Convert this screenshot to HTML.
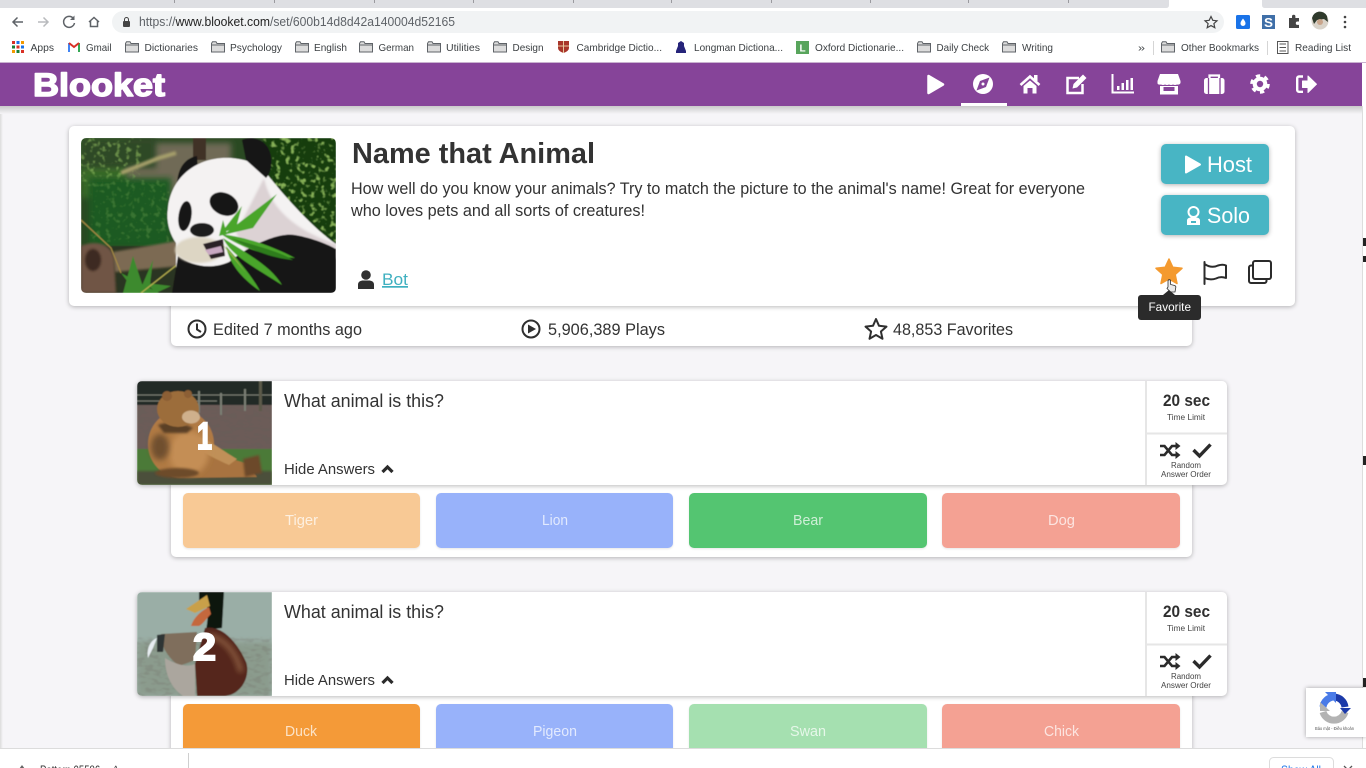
<!DOCTYPE html>
<html lang="en"><head><meta charset="utf-8"><title>Blooket - Name that Animal</title>
<style>
html,body{margin:0;padding:0;width:1366px;height:768px;overflow:hidden;background:#f6f5f8;font-family:"Liberation Sans",sans-serif}
.a{position:absolute}
.card{background:#fff;box-shadow:0 1px 5px rgba(0,0,0,.28);border-radius:5px}
.btn{position:absolute;height:55px;border-radius:5px;box-shadow:0 1px 2px rgba(0,0,0,.1)}
.teal{position:absolute;left:1161px;width:108px;height:40px;background:#48b5c4;border-radius:5px;box-shadow:0 1px 5px rgba(0,0,0,.3)}
svg{position:absolute;left:0;top:0}
text{font-family:"Liberation Sans",sans-serif;white-space:pre}
</style></head><body>
<div class="a" style="left:0;top:107px;width:3px;height:641px;background:linear-gradient(90deg,#dcdcdc,#f6f5f8)"></div>
<div class="a" style="left:0;top:106px;width:1362px;height:8px;background:linear-gradient(#c9c9c9,#f6f5f8)"></div>
<div class="a" style="left:1362px;top:106px;width:4px;height:642px;background:#fff;border-left:1px solid #ddd;box-sizing:border-box"></div>

<div class="card a" style="left:171px;top:300px;width:1021px;height:46px"></div>
<div class="card a" style="left:69px;top:126px;width:1226px;height:180px"></div>
<div class="teal" style="top:144px"></div><div class="teal" style="top:195px"></div>

<div class="card a" style="left:171px;top:480px;width:1021px;height:77px"></div>
<div class="card a" style="left:137px;top:381px;width:1090px;height:104px"></div>
<div class="btn" style="left:183px;top:493px;width:237px;background:#f8c995"></div>
<div class="btn" style="left:436px;top:493px;width:237px;background:#98b2fa"></div>
<div class="btn" style="left:689px;top:493px;width:238px;background:#54c571"></div>
<div class="btn" style="left:942px;top:493px;width:238px;background:#f4a193"></div>

<div class="card a" style="left:171px;top:691px;width:1021px;height:77px"></div>
<div class="card a" style="left:137px;top:592px;width:1090px;height:104px"></div>
<div class="btn" style="left:183px;top:704px;width:237px;background:#f49a38"></div>
<div class="btn" style="left:436px;top:704px;width:237px;background:#98b2fa"></div>
<div class="btn" style="left:689px;top:704px;width:238px;background:#a5e0b0"></div>
<div class="btn" style="left:942px;top:704px;width:238px;background:#f4a193"></div>

<svg width="1366" height="768" viewBox="0 0 1366 768" xmlns="http://www.w3.org/2000/svg">
<defs>
<filter id="b05" x="-5%" y="-5%" width="110%" height="110%"><feGaussianBlur stdDeviation=".6"/></filter>
<filter id="b1" x="-20%" y="-20%" width="140%" height="140%"><feGaussianBlur stdDeviation="1"/></filter>
<filter id="b3" x="-30%" y="-30%" width="160%" height="160%"><feGaussianBlur stdDeviation="3"/></filter>
<filter id="leaf" x="0" y="0" width="100%" height="100%"><feTurbulence type="fractalNoise" baseFrequency=".2" numOctaves="2" seed="4"/><feColorMatrix values="0 0 0 0 .36  0 0 0 0 .62  0 0 0 0 .14  0 0 0 6 -3.300"/></filter>
<filter id="dk" x="0" y="0" width="100%" height="100%"><feTurbulence type="fractalNoise" baseFrequency=".12 .3" numOctaves="2" seed="8"/><feColorMatrix values="0 0 0 0 .14  0 0 0 0 .11  0 0 0 0 .1  0 0 0 5 -2.400"/></filter>
<filter id="shd" x="-20%" y="-20%" width="140%" height="140%"><feDropShadow dx="0" dy="0" stdDeviation="2" flood-color="#000" flood-opacity=".35"/></filter>
<clipPath id="cp"><rect width="255" height="155" rx="5"/></clipPath>
<clipPath id="cq"><path d="M5 0H135V104H5a5 5 0 0 1-5-5V5a5 5 0 0 1 5-5z"/></clipPath>
<symbol id="fd" viewBox="0 0 14 12"><path d="M.5 2.500V11h13V2.500H6L5 .8H1.500z" fill="#dcdcdc" stroke="#5f6368" stroke-width="1"/><path d="M.5 4H13.500" stroke="#5f6368" stroke-width="1"/></symbol>
<g id="shuf" fill="none" stroke="#2b2b2b" stroke-width="2.600"><path d="M0 4H4.500L12 13H16M0 13H4.500L12 4H16"/><path d="M15.500 0L20.500 4L15.500 8zM15.500 9L20.500 13L15.500 17z" fill="#2b2b2b" stroke="none"/></g>
</defs>

<!-- Chrome -->
<rect width="1366" height="63" fill="#fff"/>
<rect width="1366" height="8" fill="#dedfe3"/>
<path d="M1166 8q3 0 3-3V0h93v5q0 3 3 3z" fill="#fff"/>
<g fill="#9a9a9f"><rect x="174" width="1" height="3"/><rect x="274" width="1" height="3"/><rect x="374" width="1" height="3"/><rect x="473" width="1" height="3"/><rect x="573" width="1" height="3"/><rect x="671" width="1" height="3"/><rect x="771" width="1" height="3"/><rect x="870" width="1" height="3"/><rect x="968" width="1" height="3"/><rect x="1068" width="1" height="3"/></g>
<rect x="112" y="11" width="1112" height="22" rx="11" fill="#f1f3f4"/>
<g fill="none" stroke="#5f6368" stroke-width="1.500"><path d="M23 22H13M17.500 17.500L13 22l4.500 4.500"/><path d="M38 22H48M43.500 17.500L48 22l-4.500 4.500" stroke="#b8babd"/><path d="M73.500 18.500a5.500 5.500 0 1 0 1 4.500"/><path d="M89 22l5-4.500 5 4.500M90.500 21v5.500h7V21"/></g>
<path d="M74.500 15.500v4.500h-4.500z" fill="#5f6368"/>
<rect x="123" y="21" width="7" height="6" rx="1" fill="#444"/><path d="M124.500 21v-1.500a2 2 0 0 1 4 0V21" fill="none" stroke="#444" stroke-width="1"/>
<text x="139" y="26" font-size="12.500" textLength="316" lengthAdjust="spacingAndGlyphs" fill="#5f6368">https://<tspan fill="#222">www.blooket.com</tspan>/set/600b14d8d42a140004d52165</text>
<polygon points="1211,16.500 1212.800,20.300 1217,20.800 1213.900,23.600 1214.800,27.700 1211,25.600 1207.200,27.700 1208.100,23.600 1205,20.800 1209.200,20.300" fill="none" stroke="#444" stroke-width="1.200"/>
<rect x="1236" y="15" width="14" height="14" rx="1.500" fill="#1a73e8"/><path d="M1243 18.500c1.800 2.500 2.500 3.500 2.500 5a2.500 2.500 0 0 1-5 0c0-1.500.7-2.500 2.500-5z" fill="#fff"/>
<rect x="1262" y="15" width="13" height="14" fill="#3f6fa8"/><text x="1264" y="27" font-size="13" font-weight="bold" fill="#fff" textLength="9" lengthAdjust="spacingAndGlyphs">S</text>
<path d="M1289 18h3v-1.500a1.700 1.700 0 0 1 3.400 0V18h3.600v3.500h-1.500a1.700 1.700 0 0 0 0 3.400h1.500V28h-10z" fill="#444"/>
<circle cx="1320" cy="21" r="8.500" fill="#d9d3c9"/><path d="M1312 18a8 8 0 0 1 15-2l1 6-4-3-7 1-3 4z" fill="#2f3a2c"/><circle cx="1320" cy="22" r="3" fill="#c9a58b"/>
<g fill="#444"><circle cx="1345" cy="17" r="1.300"/><circle cx="1345" cy="22" r="1.300"/><circle cx="1345" cy="27" r="1.300"/></g>

<!-- bookmarks -->
<g>
<rect x="12" y="41" width="3" height="3" fill="#d93025"/><rect x="16.500" y="41" width="3" height="3" fill="#1a73e8"/><rect x="21" y="41" width="3" height="3" fill="#f29900"/>
<rect x="12" y="45.500" width="3" height="3" fill="#188038"/><rect x="16.500" y="45.500" width="3" height="3" fill="#d93025"/><rect x="21" y="45.500" width="3" height="3" fill="#1a73e8"/>
<rect x="12" y="50" width="3" height="3" fill="#f29900"/><rect x="16.500" y="50" width="3" height="3" fill="#188038"/><rect x="21" y="50" width="3" height="3" fill="#d93025"/>
<path d="M69 52V43" stroke="#4285f4" stroke-width="2"/><path d="M79 52V43" stroke="#34a853" stroke-width="2"/><path d="M69 43l5 4 5-4" fill="none" stroke="#d93025" stroke-width="2"/>
<use href="#fd" x="125" y="41" width="14" height="12"/><use href="#fd" x="211" y="41" width="14" height="12"/><use href="#fd" x="295" y="41" width="14" height="12"/><use href="#fd" x="359" y="41" width="14" height="12"/><use href="#fd" x="427" y="41" width="14" height="12"/><use href="#fd" x="493" y="41" width="14" height="12"/><use href="#fd" x="917" y="41" width="14" height="12"/><use href="#fd" x="1002" y="41" width="14" height="12"/><use href="#fd" x="1161" y="41" width="14" height="12"/>
<path d="M558 41h11v7q0 3-5.500 5-5.500-2-5.500-5z" fill="#a8362a"/><path d="M563.500 41v12M558 46h11" stroke="#e8c9a0" stroke-width="1"/>
<path d="M678 43l3-2 3 2v3l2 5v2h-10v-2l2-5z" fill="#26247a"/>
<rect x="796" y="41" width="13" height="13" fill="#58a55c"/><text x="799.500" y="51.500" font-size="10" font-weight="bold" fill="#fff">L</text>
<rect x="1277.500" y="41.500" width="10.500" height="12" fill="none" stroke="#555" stroke-width="1"/><path d="M1279.500 44h6.500M1279.500 47.500h6.500M1279.500 51h6.500" stroke="#555" stroke-width="1"/>
<rect x="1153" y="41" width="1" height="14" fill="#d5d5d5"/><rect x="1267" y="41" width="1" height="14" fill="#d5d5d5"/>
</g>
<g font-size="10.500" fill="#3c4043">
<text x="30.500" y="51" textLength="23.500" lengthAdjust="spacingAndGlyphs">Apps</text>
<text x="86" y="51" textLength="25.500" lengthAdjust="spacingAndGlyphs">Gmail</text>
<text x="144.500" y="51" textLength="53.500" lengthAdjust="spacingAndGlyphs">Dictionaries</text>
<text x="230" y="51" textLength="52" lengthAdjust="spacingAndGlyphs">Psychology</text>
<text x="314" y="51" textLength="33" lengthAdjust="spacingAndGlyphs">English</text>
<text x="378.500" y="51" textLength="35.500" lengthAdjust="spacingAndGlyphs">German</text>
<text x="446" y="51" textLength="34" lengthAdjust="spacingAndGlyphs">Utilities</text>
<text x="512.500" y="51" textLength="31" lengthAdjust="spacingAndGlyphs">Design</text>
<text x="576.500" y="51" textLength="85.500" lengthAdjust="spacingAndGlyphs">Cambridge Dictio...</text>
<text x="694" y="51" textLength="89" lengthAdjust="spacingAndGlyphs">Longman Dictiona...</text>
<text x="815" y="51" textLength="89" lengthAdjust="spacingAndGlyphs">Oxford Dictionarie...</text>
<text x="936.500" y="51" textLength="52.500" lengthAdjust="spacingAndGlyphs">Daily Check</text>
<text x="1022" y="51" textLength="31" lengthAdjust="spacingAndGlyphs">Writing</text>
<text x="1138" y="51" textLength="7" lengthAdjust="spacingAndGlyphs">»</text>
<text x="1181" y="51" textLength="78" lengthAdjust="spacingAndGlyphs">Other Bookmarks</text>
<text x="1295" y="51" textLength="56" lengthAdjust="spacingAndGlyphs">Reading List</text>
</g>

<!-- Nav -->
<rect y="62" width="1366" height="1" fill="#c9b2d0"/>
<rect y="63" width="1362" height="43" fill="#864499"/>
<rect x="1362" y="63" width="4" height="43" fill="#fff"/>
<text x="33" y="96" font-size="32" font-weight="bold" fill="#fff" stroke="#fff" stroke-width="1.500" stroke-linejoin="round" textLength="132" lengthAdjust="spacingAndGlyphs">Blooket</text>
<rect x="961" y="103" width="46" height="3" fill="#fff"/>
<path d="M928.500 76L943 84.500L928.500 93z" fill="#fff" stroke="#fff" stroke-width="2.500" stroke-linejoin="round"/>
<circle cx="983" cy="84" r="10" fill="#fff"/><path d="M989.500 77.500L986 87L976.500 90.500L980 81z" fill="#864499"/><circle cx="983" cy="84" r="1.500" fill="#fff"/>
<path d="M1020.500 85L1030 76.500L1039.500 85" fill="none" stroke="#fff" stroke-width="2.600"/><path d="M1023.500 86L1030 80.500L1036.500 86V93.500H1032.500V88H1027.500V93.500H1023.500z" fill="#fff"/><rect x="1034" y="75" width="3.500" height="6" fill="#fff"/>
<path d="M1079 78H1067.500V93H1082.500V84" fill="none" stroke="#fff" stroke-width="2.500"/><path d="M1072.500 88.500L1073.500 84L1083 74.500L1086.500 78L1077 87.500z" fill="#fff"/>
<path d="M1112.500 74V92.500H1134" fill="none" stroke="#fff" stroke-width="2"/><g fill="#fff"><rect x="1117" y="86" width="2.500" height="4"/><rect x="1121.500" y="83" width="2.500" height="7"/><rect x="1126" y="80" width="2.500" height="10"/><rect x="1130.500" y="78" width="2.500" height="12"/></g>
<path d="M1160 74H1178L1180.500 81V83a3 3 0 0 1-3.500 1.500q-2 1-4 0-2 1-4 0-2 1-4 0-2 1-4 0-3.500.5-3.500-1.500V81z" fill="#fff"/><path d="M1160 86H1178V94.500H1160z" fill="#fff"/><rect x="1163.500" y="87" width="11" height="4" fill="#864499"/>
<rect x="1204" y="78" width="20.500" height="16" rx="2.500" fill="#fff"/><path d="M1209.500 78V75.500H1219V78" fill="none" stroke="#fff" stroke-width="2.200"/><path d="M1208.500 78V94M1220 78V94" stroke="#864499" stroke-width="1.300"/>
<circle cx="1260" cy="84" r="7.300" fill="#fff"/><circle cx="1260" cy="84" r="8.300" fill="none" stroke="#fff" stroke-width="3" stroke-dasharray="4.300 4.390"/><circle cx="1260" cy="84" r="3.200" fill="#864499"/>
<path d="M1303 76.500H1299a1.800 1.800 0 0 0-1.800 1.800V90a1.800 1.800 0 0 0 1.800 1.800H1303" fill="none" stroke="#fff" stroke-width="2.400"/><path d="M1302.500 81H1308V76L1316.500 84.200L1308 92.500V87.500H1302.500z" fill="#fff" stroke="#fff" stroke-linejoin="round"/>

<!-- Panda -->
<g transform="translate(81 138)"><g clip-path="url(#cp)"><g filter="url(#b05)">
<rect width="255" height="155" fill="#2b4a24"/>
<rect x="40" y="5" width="110" height="60" fill="#6f6a57" filter="url(#b3)"/>
<rect x="112" y="0" width="13" height="22" fill="#3f3028"/>
<rect x="0" y="0" width="45" height="60" fill="#3a6a2a" filter="url(#b3)"/>
<rect x="0" y="0" width="75" height="30" fill="#2f4a26" filter="url(#b3)"/>
<rect x="0" width="60" height="48" filter="url(#leaf)" opacity=".5"/>
<rect x="182" width="73" height="110" fill="#173d10"/>
<rect x="182" width="73" height="105" filter="url(#leaf)" opacity=".8"/>
<rect x="8" y="40" width="82" height="70" fill="#1e5a22" filter="url(#b3)"/>
<rect x="10" y="42" width="78" height="62" filter="url(#leaf)" opacity=".22"/>
<path d="M40 35L78 20L95 15" stroke="#a7a06c" stroke-width="4" fill="none" filter="url(#b1)"/>
<rect x="0" y="108" width="110" height="47" fill="#2c3420"/>
<path d="M32 114L96 103L100 128L34 134z" fill="#7c6a52" filter="url(#b1)"/>
<path d="M0 108C14 102 30 105 33 120L35 155H0z" fill="#705545" filter="url(#b1)"/><ellipse cx="12" cy="122" rx="8" ry="11" fill="#3d2c22" filter="url(#b1)"/>
<g fill="#3c8a2e"><path d="M52 118L64 155H42z"/><path d="M72 122L68 155L60 150z"/><path d="M40 135L78 155H55z"/><path d="M90 148L65 145L75 155z"/></g>
<path d="M0 82L30 110L40 135" stroke="#a58a45" stroke-width="1.200" fill="none"/><path d="M60 155L120 108" stroke="#b5b050" stroke-width="1.200" fill="none"/>
<path d="M96 45C97 30 104 20 116 18L118 46z" fill="#151515"/>
<path d="M186 36C205 60 232 90 255 106V155H95L95 105C88 95 85 82 87 70C90 40 115 18 150 20C165 21 178 26 186 36z" fill="#f4f2f2"/>
<path d="M183 40C190 75 222 95 255 106V120H170L155 95z" fill="#dcd2d4" filter="url(#b1)"/>
<path d="M91 155L97 118C110 128 130 132 148 124C165 110 195 94 214 97C232 100 248 107 255 111V155z" fill="#141313"/>
<ellipse cx="118" cy="112" rx="24" ry="13" fill="#ddd6c4" filter="url(#b1)"/>
<path d="M161 2C170-2 184 0 189 14C192 24 190 35 185 40L165 22z" fill="#141414"/>
<ellipse cx="143" cy="66" rx="15" ry="11" fill="#121212" transform="rotate(25 143 66)"/>
<ellipse cx="104" cy="78" rx="6.500" ry="15" fill="#121212" transform="rotate(8 104 78)"/>
<ellipse cx="121" cy="92" rx="12" ry="7" fill="#1d1d1d"/>
<path d="M122 106L142 101L144 118L130 121z" fill="#2a2026"/>
<path d="M124 112L140 108L142 114L128 117z" fill="#c9a9c2"/>
<g fill="#4aa52c"><path d="M142 97L196 56L172 90z"/><path d="M140 95L161 68L155 90z"/><path d="M138 98L142 82L146 96z"/><path d="M140 96C170 100 195 110 214 120C185 118 160 110 140 96z"/><path d="M142 100C165 115 190 128 201 147C175 130 150 118 142 100z"/><path d="M145 108C160 125 172 140 179 153C160 140 148 125 145 108z"/><path d="M150 100C175 108 200 114 212 122C190 120 170 112 150 100z" fill="#2f7d1f"/><path d="M140 105L165 135L150 115z" fill="#9fb14a"/></g>
</g></g></g>

<!-- Bear -->
<g transform="translate(137 381)"><g clip-path="url(#cq)"><g filter="url(#b05)">
<rect width="135" height="104" fill="#6c5b58"/>
<rect width="135" height="24" fill="#232a25"/>
<rect y="24" width="135" height="46" filter="url(#dk)"/>
<g stroke="#7a7f75" stroke-width="1"><path d="M0 14H135M0 20H80"/><path d="M62 10V32M84 12V34M108 8V30" stroke-width="2"/></g>
<rect x="122" y="0" width="3" height="30" fill="#5c5a48"/>
<rect y="68" width="135" height="36" fill="#4c7a38"/>
<rect y="90" width="135" height="14" fill="#4b4f3a" filter="url(#b1)"/>
<ellipse cx="44" cy="63" rx="33" ry="34" fill="#b07a44"/>
<path d="M52 56C70 62 92 80 110 82L120 96L48 97z" fill="#a8733f"/>
<path d="M62 56C74 60 86 70 100 78L92 84C78 78 68 72 60 68z" fill="#c09058"/>
<ellipse cx="52" cy="72" rx="20" ry="22" fill="#c48e54" filter="url(#b3)"/>
<ellipse cx="23" cy="66" rx="9" ry="13" fill="#70502f" filter="url(#b3)"/>
<ellipse cx="40" cy="92" rx="22" ry="5" fill="#6d4c2b" filter="url(#b1)"/>
<path d="M21 44C30 40 45 41 56 47L50 52L27 52z" fill="#5a3f27" filter="url(#b1)"/>
<ellipse cx="41" cy="28" rx="21" ry="18" fill="#9c6d3b"/>
<ellipse cx="54" cy="36" rx="9" ry="6.500" fill="#cfb08c"/>
<circle cx="30" cy="15" r="5" fill="#8c5f36"/><circle cx="51" cy="13" r="4" fill="#8c5f36"/>
<path d="M106 78L122 74L125 92L108 96z" fill="#6c4a2a" filter="url(#b1)"/>
</g></g></g>

<!-- Duck -->
<g transform="translate(137 592)"><g clip-path="url(#cq)"><g filter="url(#b05)">
<rect width="135" height="104" fill="#9aaea6"/>
<rect x="0" y="50" width="135" height="54" fill="#8b9b8d" filter="url(#b3)"/>
<rect y="45" width="135" height="59" filter="url(#dk)" opacity=".18"/>
<path d="M62 0H87L85 36L69 38C71 28 71 20 70 14L62 10z" fill="#0f1410"/>
<path d="M49 17L70 3L73 14L58 21z" fill="#c9a04a"/>
<path d="M54 34C57 25 64 19 72 15L74 22C69 27 66 32 62 34z" fill="#c4673c"/>
<path d="M68 36C85 33 100 50 109 70C114 84 104 104 86 104H60L58 72z" fill="#54261b"/>
<path d="M72 44C88 46 100 62 104 80" fill="none" stroke="#8b5a3f" stroke-width="5" filter="url(#b3)"/>
<path d="M24 42L60 40L58 68L42 74C32 66 24 56 24 42z" fill="#7f6e5c"/>
<path d="M20 46L16 56L11 66C9 56 14 48 20 46z" fill="#e7edf1"/>
<path d="M20 43L28 42L26 60L20 60z" fill="#2f3436"/>
<path d="M28 66C38 72 50 76 58 72V104H46C34 96 28 82 28 66z" fill="#aba69e"/>
</g></g></g>

<!-- Card text -->
<text x="352" y="163" font-size="29" font-weight="bold" fill="#333" textLength="243" lengthAdjust="spacingAndGlyphs">Name that Animal</text>
<text x="351" y="194" font-size="17" fill="#333" textLength="734" lengthAdjust="spacingAndGlyphs">How well do you know your animals? Try to match the picture to the animal's name! Great for everyone</text>
<text x="351" y="216" font-size="17" fill="#333" textLength="294" lengthAdjust="spacingAndGlyphs">who loves pets and all sorts of creatures!</text>
<circle cx="366" cy="275" r="4.800" fill="#2f2f2f"/><path d="M358 289V284.500C358 281.500 361 280.500 363 280.500H369C371 280.500 374 281.500 374 284.500V289z" fill="#2f2f2f"/>
<text x="382" y="285" font-size="17" fill="#3fb0c0" text-decoration="underline" textLength="26" lengthAdjust="spacingAndGlyphs">Bot</text>

<path d="M1186 156.500L1200 164.500L1186 172.500z" fill="#fff" stroke="#fff" stroke-width="2" stroke-linejoin="round"/>
<text x="1207" y="172" font-size="22" fill="#fff" textLength="45" lengthAdjust="spacingAndGlyphs">Host</text>
<circle cx="1193.500" cy="212" r="5" fill="none" stroke="#fff" stroke-width="2"/><path d="M1187 225V220.500C1187 218.500 1189 217.500 1191 217.500H1196C1198 217.500 1200 218.500 1200 220.500V225z" fill="#fff"/><rect x="1191" y="221" width="5" height="2" fill="#48b5c4"/>
<text x="1207" y="223" font-size="22" fill="#fff" textLength="43" lengthAdjust="spacingAndGlyphs">Solo</text>

<polygon points="1169,259 1172.800,267.300 1182,268.300 1175.200,274.500 1177,283.500 1169,279 1161,283.500 1162.800,274.500 1156,268.300 1165.200,267.300" fill="#f49a2f" stroke="#f49a2f" stroke-width="1.500" stroke-linejoin="round"/>
<path d="M1168 287V281a1.300 1.300 0 0 1 2.600 0V284.500l4 1c1 .3 1.400 1 1.200 2L1175 292H1170.500L1167 288.500z" fill="#e9e9e9" stroke="#333" stroke-width=".8"/>
<path d="M1204.500 262V284" stroke="#2b2b2b" stroke-width="2" stroke-linecap="round"/><path d="M1204.500 264C1209 267 1214 267.500 1218 265.500C1221 264.500 1224 264.500 1226 265.500V278C1222 276.500 1219 277 1216 278.500C1212 280 1208 279.500 1204.500 278" fill="none" stroke="#2b2b2b" stroke-width="2" stroke-linejoin="round"/>
<rect x="1253" y="261" width="18" height="18" rx="2" fill="none" stroke="#2b2b2b" stroke-width="2"/><path d="M1253 265.500H1251a2 2 0 0 0-2 2V281a2 2 0 0 0 2 2H1264.500a2 2 0 0 0 2-2V279" fill="none" stroke="#2b2b2b" stroke-width="2"/>
<path d="M1163 295L1169 290L1175 295z" fill="#2b2b2b"/><rect x="1138" y="295" width="63" height="25" rx="3" fill="#2b2b2b"/>
<text x="1148.500" y="311" font-size="12" fill="#fff" textLength="42.500" lengthAdjust="spacingAndGlyphs">Favorite</text>

<circle cx="197" cy="329" r="8.500" fill="none" stroke="#2f2f2f" stroke-width="2"/><path d="M197 323.500V329.500L201 332" fill="none" stroke="#2f2f2f" stroke-width="2"/>
<text x="213" y="335" font-size="16.500" fill="#333" textLength="149" lengthAdjust="spacingAndGlyphs">Edited 7 months ago</text>
<circle cx="531" cy="329" r="8.500" fill="none" stroke="#2f2f2f" stroke-width="2"/><path d="M528 324.500L536 329L528 333.500z" fill="#2f2f2f"/>
<text x="548" y="335" font-size="16.500" fill="#333" textLength="117" lengthAdjust="spacingAndGlyphs">5,906,389 Plays</text>
<polygon points="876,319 879,325.800 886.500,326.600 880.900,331.500 882.500,338.800 876,335 869.500,338.800 871.100,331.500 865.500,326.600 873,325.800" fill="none" stroke="#2f2f2f" stroke-width="2" stroke-linejoin="round"/>
<text x="893" y="335" font-size="16.500" fill="#333" textLength="120" lengthAdjust="spacingAndGlyphs">48,853 Favorites</text>

<!-- Question 1 -->
<text x="197" y="449" font-size="38" font-weight="bold" fill="#fff" stroke="#fff" stroke-width="2" textLength="15" lengthAdjust="spacingAndGlyphs">1</text>
<rect x="1145" y="381" width="2" height="104" fill="#e6e6e6"/><rect x="1147" y="432.500" width="80" height="2" fill="#e6e6e6"/>
<text x="284" y="407" font-size="18.500" fill="#333" textLength="160" lengthAdjust="spacingAndGlyphs">What animal is this?</text>
<text x="284" y="474" font-size="15" fill="#333" textLength="91" lengthAdjust="spacingAndGlyphs">Hide Answers</text>
<path d="M382.500 472L387.500 467L392.500 472" fill="none" stroke="#2b2b2b" stroke-width="3.200"/>
<text x="1163" y="406" font-size="16.500" font-weight="bold" fill="#2f2f2f" textLength="47" lengthAdjust="spacingAndGlyphs">20 sec</text>
<text x="1167" y="420" font-size="8" fill="#444" textLength="38" lengthAdjust="spacingAndGlyphs">Time Limit</text>
<use href="#shuf" x="1160" y="442"/>
<path d="M1193.500 450L1199.500 456L1210.500 444.500" fill="none" stroke="#2b2b2b" stroke-width="3.400"/>
<text x="1171" y="468" font-size="8" fill="#444" textLength="30" lengthAdjust="spacingAndGlyphs">Random</text>
<text x="1161" y="477" font-size="8" fill="#444" textLength="50" lengthAdjust="spacingAndGlyphs">Answer Order</text>
<g font-size="15" fill="#fff" fill-opacity=".72">
<text x="285" y="525" textLength="33" lengthAdjust="spacingAndGlyphs">Tiger</text>
<text x="542" y="525" textLength="26" lengthAdjust="spacingAndGlyphs">Lion</text>
<text x="793" y="525" textLength="30" lengthAdjust="spacingAndGlyphs">Bear</text>
<text x="1048" y="525" textLength="27" lengthAdjust="spacingAndGlyphs">Dog</text>
</g>

<!-- Question 2 -->
<text x="193" y="660" font-size="38" font-weight="bold" fill="#fff" stroke="#fff" stroke-width="2" textLength="23" lengthAdjust="spacingAndGlyphs">2</text>
<rect x="1145" y="592" width="2" height="104" fill="#e6e6e6"/><rect x="1147" y="643.500" width="80" height="2" fill="#e6e6e6"/>
<text x="284" y="618" font-size="18.500" fill="#333" textLength="160" lengthAdjust="spacingAndGlyphs">What animal is this?</text>
<text x="284" y="685" font-size="15" fill="#333" textLength="91" lengthAdjust="spacingAndGlyphs">Hide Answers</text>
<path d="M382.500 683L387.500 678L392.500 683" fill="none" stroke="#2b2b2b" stroke-width="3.200"/>
<text x="1163" y="617" font-size="16.500" font-weight="bold" fill="#2f2f2f" textLength="47" lengthAdjust="spacingAndGlyphs">20 sec</text>
<text x="1167" y="631" font-size="8" fill="#444" textLength="38" lengthAdjust="spacingAndGlyphs">Time Limit</text>
<use href="#shuf" x="1160" y="653"/>
<path d="M1193.500 661L1199.500 667L1210.500 655.500" fill="none" stroke="#2b2b2b" stroke-width="3.400"/>
<text x="1171" y="679" font-size="8" fill="#444" textLength="30" lengthAdjust="spacingAndGlyphs">Random</text>
<text x="1161" y="688" font-size="8" fill="#444" textLength="50" lengthAdjust="spacingAndGlyphs">Answer Order</text>
<g font-size="15" fill="#fff" fill-opacity=".72">
<text x="285" y="736" textLength="32" lengthAdjust="spacingAndGlyphs">Duck</text>
<text x="533" y="736" textLength="44" lengthAdjust="spacingAndGlyphs">Pigeon</text>
<text x="790" y="736" textLength="36" lengthAdjust="spacingAndGlyphs">Swan</text>
<text x="1044" y="736" textLength="35" lengthAdjust="spacingAndGlyphs">Chick</text>
</g>

<!-- right edge fragments -->
<g fill="#222"><rect x="1363" y="238" width="3" height="8"/><rect x="1363" y="256" width="3" height="6"/><rect x="1363" y="456" width="3" height="9"/><rect x="1363" y="678" width="3" height="9"/><rect x="1363" y="692" width="3" height="5"/></g>

<!-- reCAPTCHA -->
<rect x="1306" y="688" width="60" height="49" fill="#fff" filter="url(#shd)"/>
<g fill="none" stroke-width="7">
<path d="M1345 712A11.500 11.500 0 0 1 1323 712" stroke="#b3b3b3"/>
<path d="M1323 707A11.500 11.500 0 0 1 1334 697" stroke="#4a7be8"/>
<path d="M1334 697A11.500 11.500 0 0 1 1345 707" stroke="#1c3aa9"/>
</g>
<path d="M1320 702V711H1330z" fill="#b3b3b3"/><path d="M1325 692H1336V703z" fill="#4a7be8"/><path d="M1340 708H1351L1345 714z" fill="#1c3aa9"/>
<text x="1315" y="730" font-size="4.500" fill="#555" textLength="39" lengthAdjust="spacingAndGlyphs">Bảo mật - Điều khoản</text>

<!-- Download shelf -->
<rect y="748" width="1366" height="20" fill="#fff"/><rect y="748" width="1366" height="1" fill="#dcdcdc"/>
<rect x="188" y="753" width="1" height="15" fill="#cfcfcf"/>
<path d="M19 769l3-4 3 4z" fill="#666"/>
<text x="40" y="774" font-size="12" fill="#333" textLength="78" lengthAdjust="spacingAndGlyphs">Pattern 05586...  ^</text>
<rect x="1269.500" y="757.500" width="64" height="22" rx="4" fill="#fff" stroke="#dcdcdc"/>
<text x="1281" y="774" font-size="12" fill="#1a73e8" textLength="40" lengthAdjust="spacingAndGlyphs">Show All</text>
<path d="M1344 766l8 8M1352 766l-8 8" stroke="#555" stroke-width="1.300"/>
</svg>
</body></html>
